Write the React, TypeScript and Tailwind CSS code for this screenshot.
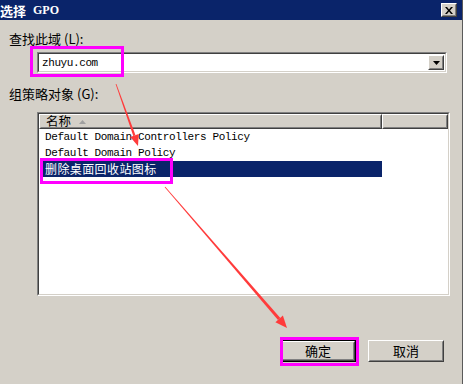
import React from "react";

const cjk = "font-['Noto_Sans_CJK_SC','Noto_Sans_CJK_JP',sans-serif]";
const mono = "font-['Liberation_Mono','Noto_Sans_CJK_SC',monospace]";

function Raised({ children, className = "" }: { children?: React.ReactNode; className?: string }) {
  return (
    <div className={`border-t border-l border-white border-r border-b border-r-[#404040] border-b-[#404040] ${className}`}>
      <div className="w-full h-full border-t border-l border-[#d4d0c8] border-r border-b border-r-[#808080] border-b-[#808080] flex items-center justify-center">
        {children}
      </div>
    </div>
  );
}

function Sunken({ children, className = "" }: { children?: React.ReactNode; className?: string }) {
  return (
    <div className={`border-t border-l border-[#808080] border-r border-b border-r-white border-b-white ${className}`}>
      <div className="w-full h-full border-t border-l border-[#404040] border-r border-b border-r-[#d4d0c8] border-b-[#d4d0c8] bg-white">
        {children}
      </div>
    </div>
  );
}

export default function App() {
  return (
    <div className={`relative w-[463px] h-[384px] overflow-hidden bg-[#d4d0c8] border-r border-[#5a5a5a] ${cjk}`}>
      {/* title bar */}
      <div className="h-[20px] bg-[#0a246a] flex items-center justify-between pr-[5px]">
        <div className="text-white font-bold text-[13px] leading-none flex items-center gap-[7px]">
          <span>选择</span>
          <span className="font-['Liberation_Serif',serif] text-[12px]">GPO</span>
        </div>
        <Raised className="w-[16px] h-[14px] bg-[#d4d0c8]">
          <svg width="8" height="7" viewBox="0 0 8 7">
            <path d="M0 0h2l2 2.5L6 0h2L5 3.5 8 7H6L4 4.5 2 7H0l3-3.5z" fill="#000" />
          </svg>
        </Raised>
      </div>

      <div className="text-[13px] leading-[16px] text-black pl-[9px] mt-[11px]">
        查找此域<span className="ml-[3px]">(L):</span>
      </div>

      <Sunken className="ml-[37px] mt-[5px] w-[410px] h-[21px]">
        <div className="flex h-full items-center justify-between">
          <span className={`${mono} text-[11px] tracking-[-0.4px] pl-[3px] pt-[1px]`}>zhuyu.com</span>
          <Raised className="w-[16px] h-[15px] bg-[#d4d0c8] mr-[1px]">
            <svg width="7" height="4" viewBox="0 0 7 4">
              <path d="M0 0h7L3.5 4z" fill="#000" />
            </svg>
          </Raised>
        </div>
      </Sunken>

      <div className="text-[13px] leading-[16px] text-black pl-[9px] mt-[13px]">
        组策略对象<span className="ml-[3px]">(G):</span>
      </div>

      <Sunken className="ml-[37px] mt-[10px] w-[413px] h-[184px]">
        <div className="flex h-[15px]">
          <Raised className="w-[343px] h-full bg-[#d4d0c8]">
            <div className="w-full flex items-center gap-[8px] pl-[5px] text-[12.5px] leading-none">
              <span>名称</span>
              <svg width="7" height="4" viewBox="0 0 7 4">
                <path d="M3.5 0L7 4H0z" fill="#a0a0a0" />
              </svg>
            </div>
          </Raised>
          <Raised className="w-[66px] h-full bg-[#d4d0c8]" />
        </div>
        <div className={`${mono} text-[11px] tracking-[-0.4px] text-black`}>
          <div className="h-[16px] flex items-center pl-[6px]">Default Domain Controllers Policy</div>
          <div className="h-[16px] flex items-center pl-[6px]">Default Domain Policy</div>
          <div className={`h-[16px] w-[340px] ml-[3px] bg-[#0a246a] text-white flex items-center pl-[3px] ${cjk} text-[12px] tracking-[0.4px]`}>
            删除桌面回收站图标
          </div>
        </div>
      </Sunken>

      <div className="flex justify-end gap-[12px] pr-[18px] mt-[44px] text-[13px]">
        <div className="w-[76px] h-[22px] border border-black">
          <Raised className="w-full h-full">确定</Raised>
        </div>
        <Raised className="w-[76px] h-[22px]">取消</Raised>
      </div>

      {/* annotations */}
      <div className="absolute left-[30px] top-[46px] w-[94px] h-[31px] border-[3px] border-[#ff00ff]" />
      <div className="absolute left-[40px] top-[158px] w-[133px] h-[26px] border-[3px] border-[#ff00ff]" />
      <div className="absolute left-[280px] top-[337px] w-[79px] h-[29px] border-[3px] border-[#ff00ff]" />
      <svg className="absolute left-0 top-0" width="463" height="384" viewBox="0 0 463 384">
        <polygon points="115.6,84.1 116.4,83.9 135.5,135.2 133.3,136" fill="#ff3b3b" />
        <polygon points="130.2,137.1 138.7,134.1 138,146" fill="#ff3b3b" />
        <polygon points="164.7,187.3 165.3,186.7 280.3,317.9 278,319.9" fill="#ff3b3b" />
        <polygon points="275.4,322.2 282.9,315.6 287,328" fill="#ff3b3b" />
      </svg>
    </div>
  );
}
